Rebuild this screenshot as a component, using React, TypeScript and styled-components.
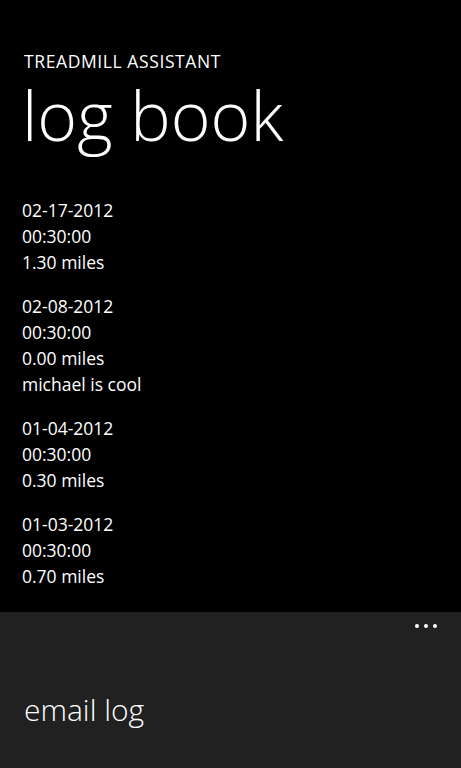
import React from "react";
import styled, { createGlobalStyle } from "styled-components";

const Global = createGlobalStyle`
  html, body { margin: 0; padding: 0; background: #000; }
  body { font-family: "Open Sans", "Segoe UI", sans-serif; color: #fff; }
`;

const Screen = styled.div`
  width: 461px;
  height: 768px;
  display: flex;
  flex-direction: column;
  background: #000;
  overflow: hidden;
`;

const Content = styled.main`
  flex: 1;
  display: flex;
  flex-direction: column;
  padding: 53px 0 0 22px;
`;

const AppName = styled.div`
  font-size: 17.5px;
  line-height: 16px;
  letter-spacing: 0.6px;
  padding-left: 2px;
  text-transform: uppercase;
`;

const PageTitle = styled.h1`
  margin: 0;
  font-size: 68px;
  font-weight: 300;
  line-height: 92px;
  letter-spacing: 0px;
`;

const List = styled.div`
  display: flex;
  flex-direction: column;
  gap: 18px;
  margin-top: 36px;
`;

const Entry = styled.div`
  display: flex;
  flex-direction: column;
`;

const Line = styled.div`
  font-size: 17.5px;
  line-height: 26px;
`;

const AppBar = styled.footer`
  height: 156px;
  background: #212121;
  display: flex;
  flex-direction: column;
  padding: 12px 24px 0 24px;
  box-sizing: border-box;
`;

const Dots = styled.div`
  align-self: flex-end;
  display: flex;
  gap: 5px;
  padding: 0 0 2px 0;
`;

const Dot = styled.span`
  width: 4px;
  height: 4px;
  border-radius: 50%;
  background: #fff;
`;

const MenuItem = styled.div`
  margin-top: 62px;
  font-size: 30px;
  font-weight: 300;
  line-height: 36px;
`;

const entries = [
  ["02-17-2012", "00:30:00", "1.30 miles"],
  ["02-08-2012", "00:30:00", "0.00 miles", "michael is cool"],
  ["01-04-2012", "00:30:00", "0.30 miles"],
  ["01-03-2012", "00:30:00", "0.70 miles"],
];

export default function App() {
  return (
    <>
      <Global />
      <Screen>
        <Content>
          <AppName>Treadmill Assistant</AppName>
          <PageTitle>log book</PageTitle>
          <List>
            {entries.map((e, i) => (
              <Entry key={i}>
                {e.map((l, j) => (
                  <Line key={j}>{l}</Line>
                ))}
              </Entry>
            ))}
          </List>
        </Content>
        <AppBar>
          <Dots>
            <Dot />
            <Dot />
            <Dot />
          </Dots>
          <MenuItem>email log</MenuItem>
        </AppBar>
      </Screen>
    </>
  );
}
